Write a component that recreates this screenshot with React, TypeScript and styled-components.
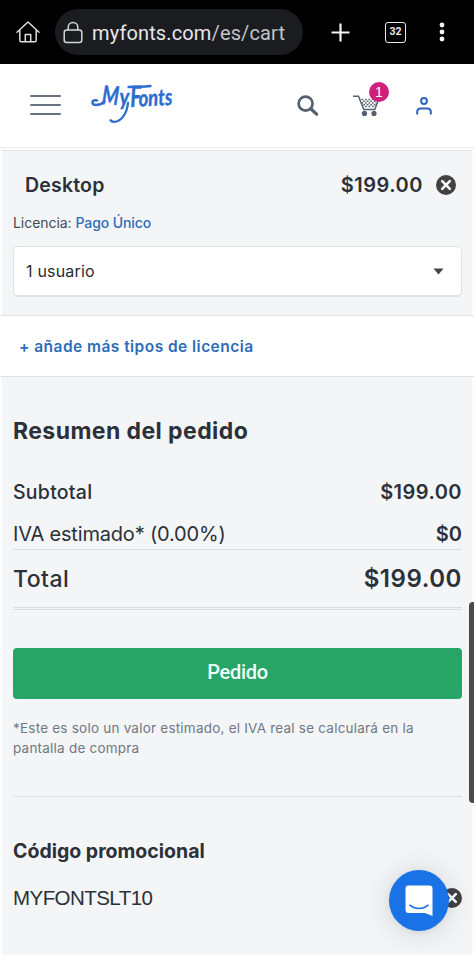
import React from "react";
import styled, { createGlobalStyle } from "styled-components";

const GlobalStyle = createGlobalStyle`
  *, *::before, *::after { box-sizing: border-box; }
  body { margin: 0; background: #fdfdfe; }
  button { border: 0; padding: 0; background: none; font: inherit; color: inherit; }
`;

const sans = `Inter, "Liberation Sans", sans-serif`;

const Screen = styled.div`
  position: relative;
  width: 474px;
  height: 956px;
  overflow: hidden;
  background: #fdfdfe;
  font-family: ${sans};
  color: #2c3038;
  svg { display: block; overflow: visible; }
`;

const BrowserBar = styled.div`
  display: flex;
  align-items: center;
  height: 64px;
  padding-left: 16px;
  background: #000;
  color: #e9e9ec;
`;

const AddressPill = styled.div`
  display: flex;
  align-items: center;
  width: 248px;
  height: 46px;
  margin: 0 28px 0 15px;
  padding-left: 8px;
  border-radius: 23px;
  background: #1b1c20;
`;

const Address = styled.span`
  margin: 2px 0 0 9px;
  font: 400 20px/24px Roboto, sans-serif;
  letter-spacing: 0.13px;
  white-space: nowrap;
  color: #e6e6ea;
`;

const AddressPath = styled.span`
  color: #c2c3c8;
`;

const TabCount = styled.button`
  width: 21px;
  height: 21px;
  margin: 0 33px 0 35px;
  border: 1.5px solid #e9e9ec;
  border-radius: 3px;
  font: 700 10.5px/18px Roboto, sans-serif;
  text-align: center;
`;

const SiteHeader = styled.header`
  display: flex;
  align-items: flex-start;
  height: 84px;
  padding: 17px 0 0 30px;
  background: #fff;
  border-bottom: 1px solid #e9ebef;
`;

const MenuButton = styled.button`
  display: flex;
  flex-direction: column;
  gap: 7px;
  width: 31px;
  margin: 14px 28px 0 0;
`;

const MenuLine = styled.span`
  height: 2px;
  border-radius: 1px;
  background: #697380;
`;

const HeaderIcon = styled.button<{ $left: number; $top: number }>`
  position: relative;
  margin: ${(p) => p.$top}px 0 0 ${(p) => p.$left}px;
`;

const CartBadge = styled.span`
  position: absolute;
  top: -13px;
  left: 16px;
  width: 20px;
  height: 20px;
  border-radius: 50%;
  background: #d0217a;
  color: #fff;
  font: 400 14px/20px "Liberation Sans", sans-serif;
  text-align: center;
`;

const LicenseCard = styled.section`
  height: 165px;
  margin: 2px 2px 0;
  padding: 22px 10px 0 11px;
  border-top: 1px solid #e1e3e7;
  background: #f3f5f7;
`;

const Row = styled.div<{ $height: number }>`
  display: flex;
  align-items: center;
  justify-content: space-between;
  height: ${(p) => p.$height}px;
`;

const Label = styled.span<{ $size: number; $weight?: number; $track?: number; $arial?: boolean }>`
  font-family: ${(p) => (p.$arial ? `"Liberation Sans", sans-serif` : sans)};
  font-size: ${(p) => p.$size}px;
  font-weight: ${(p) => p.$weight ?? 400};
  letter-spacing: ${(p) => p.$track ?? 0}px;
  white-space: nowrap;
`;

const ProductRow = styled(Row)`
  padding: 0 6px 0 12px;
`;

const PriceGroup = styled.div`
  display: flex;
  align-items: center;
  gap: 13px;
`;

const LicenseLine = styled.div`
  margin: 16px 0 0;
  font-size: 14px;
  line-height: 20px;
  letter-spacing: -0.05px;
  color: #464a52;
`;

const LicenseLink = styled.a`
  font-weight: 500;
  letter-spacing: -0.1px;
  color: #2d6db9;
`;

const UserSelect = styled.div`
  display: flex;
  align-items: center;
  justify-content: space-between;
  height: 51px;
  margin-top: 13px;
  padding: 0 17px 0 12px;
  border: 1px solid #dfe2e7;
  border-bottom-width: 2px;
  border-radius: 5px;
  background: #fff;
  color: #2b2b2e;
`;

const AddLicense = styled.div`
  height: 62px;
  padding: 20px 0 0 19px;
  border-top: 1px solid #e0e2e7;
  border-bottom: 1px solid #e0e2e7;
  background: #fff;
  color: #2d6db9;
  line-height: 20px;
`;

const Summary = styled.section`
  height: 577px;
  margin: 0 2px;
  padding: 38px 10px 0 11px;
  background: #f3f5f7;
`;

const SummaryTitle = styled.h2`
  margin: 0 0 31px;
  font-size: 23px;
  font-weight: 650;
  line-height: 32px;
  letter-spacing: 0.42px;
`;

const TaxRow = styled(Row)`
  margin-top: 13px;
  border-bottom: 1px solid #dcdfe3;
`;

const TotalRow = styled(Row)`
  border-bottom: 3px double #d9dce0;
`;

const OrderButton = styled.button`
  display: block;
  width: 449px;
  height: 51px;
  margin-top: 38px;
  padding-bottom: 3px;
  border-radius: 4px;
  background: #27a567;
  color: #f2fff8;
  font: 500 20px/24px Roboto, sans-serif;
  letter-spacing: -0.3px;
`;

const Footnote = styled.p`
  margin: 19px 0 0;
  padding-bottom: 38px;
  border-bottom: 1px solid #dcdfe3;
  font-size: 13.5px;
  line-height: 20px;
  letter-spacing: 0.22px;
  color: #717783;
`;

const PromoTitle = styled.h3`
  margin: 42px 0 0;
  font-size: 19.5px;
  font-weight: 650;
  line-height: 24px;
`;

const PromoRow = styled(Row)`
  margin-top: 22px;
`;

const ScrollThumb = styled.div`
  position: absolute;
  top: 602px;
  right: -3px;
  width: 8px;
  height: 201px;
  border-radius: 4px;
  background: #4a4a4a;
`;

const ChatButton = styled.button`
  position: absolute;
  left: 389px;
  top: 870px;
  display: grid;
  place-items: center;
  width: 60px;
  height: 61px;
  border-radius: 50%;
  background: #1a73e6;
  box-shadow: 0 1px 6px rgba(0, 0, 0, 0.06), 0 2px 32px rgba(0, 0, 0, 0.14);
`;

const RemoveIcon = () => (
  <svg width="20" height="20" viewBox="0 0 20 20">
    <circle cx="10" cy="10" r="10" fill="#424244" />
    <path d="M6.2 6.2l7.6 7.6M13.8 6.2l-7.6 7.6" stroke="#fff" strokeWidth="2.6" strokeLinecap="round" />
  </svg>
);

const HomeIcon = () => (
  <svg width="24" height="22" viewBox="0 0 24 22" fill="none" stroke="#dedee0" strokeWidth="1.5" strokeLinecap="round" strokeLinejoin="round">
    <path d="M1 11.2 12 1l11 10.2M3.8 9v10.2c0 1 .6 1.6 1.6 1.6h13.2c1 0 1.6-.6 1.6-1.6V9" />
    <path d="M9.3 20.5v-7h5.4v7" />
  </svg>
);

const LockIcon = () => (
  <svg width="20" height="23" viewBox="0 0 20 23" fill="none" stroke="#d6d6da" strokeWidth="1.5">
    <rect x="1.2" y="9" width="17.6" height="12.4" rx="2.5" />
    <path d="M5.2 9V6.2a4.8 4.8 0 0 1 9.6 0V9" />
  </svg>
);

const PlusIcon = () => (
  <svg width="19" height="19" viewBox="0 0 19 19" stroke="#f4f4f6" strokeWidth="2.2">
    <path d="M.5 9.5h18M9.5.5v18" />
  </svg>
);

const MoreIcon = () => (
  <svg width="6" height="20" viewBox="0 0 6 20" fill="#f4f4f6">
    <circle cx="3" cy="3" r="2.4" />
    <circle cx="3" cy="10" r="2.4" />
    <circle cx="3" cy="17" r="2.4" />
  </svg>
);

const Logo = () => (
  <svg width="88" height="44" viewBox="0 0 88 44" fill="none" stroke="#2b6dd0" strokeLinecap="round" strokeLinejoin="round">
    <g fill="#2b6dd0" stroke="#2b6dd0" strokeWidth=".4" fontFamily="Lato, sans-serif" fontWeight="700" fontStyle="italic">
      <text transform="translate(12.500 23) rotate(4) scale(.74 1)" fontSize="26">M</text>
      <text transform="translate(30.500 23.500) scale(.9 1)" fontSize="22">y</text>
      <text transform="translate(41.500 26) rotate(-2) scale(.72 1)" fontSize="29">F</text>
      <text transform="translate(50 25.500) rotate(-3) scale(.8 1)" fontSize="23">onts</text>
    </g>
    <path d="M8 19.500c-3-.6-5 .2-4.500 2.400.5 2.700 8 3 12-1.500" strokeWidth="2.500" />
    <path d="M39 22c-1 11-7.500 19-14 18.800-1.600 0-2.800-.6-3.500-1.500" strokeWidth="2.300" />
    <path d="M39.500 6c4-.8 13 .6 22-1" strokeWidth="2.300" />
  </svg>
);

const SearchIcon = () => (
  <svg width="22" height="22" viewBox="0 0 22 22" fill="none" stroke="#56616f">
    <circle cx="8.600" cy="8.600" r="7" strokeWidth="2.700" />
    <path d="M14 14l5.600 5.200" strokeWidth="3.200" strokeLinecap="round" />
  </svg>
);

const CartIcon = () => (
  <svg width="26" height="22" viewBox="0 0 26 22" fill="none" stroke="#56616f" strokeWidth="1.500">
    <path d="M0 1.200h5.500l5.300 13.300h11L25.300 5" />
    <path d="M8.500 4.500h15M8.500 8h15M12 11.500h10.500" strokeWidth="1.700" strokeDasharray="1.700 1.800" />
    <path d="M10.250 6.250h13.500M10.250 9.750h12.500" strokeWidth="1.700" strokeDasharray="1.700 1.800" />
    <circle cx="11.500" cy="18.400" r="2.600" fill="#56616f" stroke="none" />
    <circle cx="21" cy="18.400" r="2.600" fill="#56616f" stroke="none" />
  </svg>
);

const AccountIcon = () => (
  <svg width="16" height="18" viewBox="0 0 16 18" fill="none" stroke="#2c62b8" strokeWidth="2">
    <circle cx="8" cy="4" r="2.900" />
    <path d="M1.200 17.500V15c0-2.200 1.300-3.500 3.500-3.500h6.600c2.200 0 3.500 1.300 3.500 3.500v2.500" />
  </svg>
);

const ChatIcon = () => (
  <svg width="28" height="32" viewBox="0 0 28 32">
    <path d="M3.500.5h21A3 3 0 0 1 27.500 3.500v27.500L20 28H3.500A3 3 0 0 1 .5 25V3.500A3 3 0 0 1 3.500.5z" fill="#fff" />
    <path d="M4.800 20.200c5.500 4.500 12.900 4.500 18.400 0" fill="none" stroke="#1a73e6" strokeWidth="1.500" strokeLinecap="round" />
  </svg>
);

export default function App() {
  return (
    <Screen>
      <GlobalStyle />
      <BrowserBar>
        <HomeIcon />
        <AddressPill>
          <LockIcon />
          <Address>myfonts.com<AddressPath>/es/cart</AddressPath></Address>
        </AddressPill>
        <PlusIcon />
        <TabCount>32</TabCount>
        <MoreIcon />
      </BrowserBar>

      <SiteHeader>
        <MenuButton aria-label="Menú">
          <MenuLine />
          <MenuLine />
          <MenuLine />
        </MenuButton>
        <Logo />
        <HeaderIcon $left={120} $top={14} aria-label="Buscar"><SearchIcon /></HeaderIcon>
        <HeaderIcon $left={34} $top={14} aria-label="Carrito">
          <CartIcon />
          <CartBadge>1</CartBadge>
        </HeaderIcon>
        <HeaderIcon $left={37} $top={16} aria-label="Cuenta"><AccountIcon /></HeaderIcon>
      </SiteHeader>

      <LicenseCard>
        <ProductRow $height={24}>
          <Label $size={19.5} $weight={600} $track={0.2}>Desktop</Label>
          <PriceGroup>
            <Label $size={20} $weight={600} $track={0.5}>$199.00</Label>
            <RemoveIcon />
          </PriceGroup>
        </ProductRow>
        <LicenseLine>Licencia: <LicenseLink>Pago Único</LicenseLink></LicenseLine>
        <UserSelect>
          <Label $size={16} $track={0.2}>1 usuario</Label>
          <svg width="11" height="7" viewBox="0 0 11 7"><path d="M.5.500h10L5.500 6.500z" fill="#444" /></svg>
        </UserSelect>
      </LicenseCard>

      <AddLicense>
        <Label $size={15.5} $weight={600} $track={0.46}>+ añade más tipos de licencia</Label>
      </AddLicense>

      <Summary>
        <SummaryTitle>Resumen del pedido</SummaryTitle>
        <Row $height={28}>
          <Label $size={19.5} $weight={500} $track={0.25}>Subtotal</Label>
          <Label $size={20} $weight={600} $track={0.45}>$199.00</Label>
        </Row>
        <TaxRow $height={31}>
          <Label $size={20} $track={-0.18}>IVA estimado* (0.00%)</Label>
          <Label $size={20} $weight={600}>$0</Label>
        </TaxRow>
        <TotalRow $height={60}>
          <Label $size={23} $weight={500} $track={0.5}>Total</Label>
          <Label $size={24} $weight={600} $track={0.55}>$199.00</Label>
        </TotalRow>
        <OrderButton>Pedido</OrderButton>
        <Footnote>*Este es solo un valor estimado, el IVA real se calculará en la<br />pantalla de compra</Footnote>
        <PromoTitle>Código promocional</PromoTitle>
        <PromoRow $height={26}>
          <Label $size={20.5} $track={-0.55} $arial>MYFONTSLT10</Label>
          <RemoveIcon />
        </PromoRow>
      </Summary>

      <ScrollThumb />
      <ChatButton aria-label="Chat"><ChatIcon /></ChatButton>
    </Screen>
  );
}
